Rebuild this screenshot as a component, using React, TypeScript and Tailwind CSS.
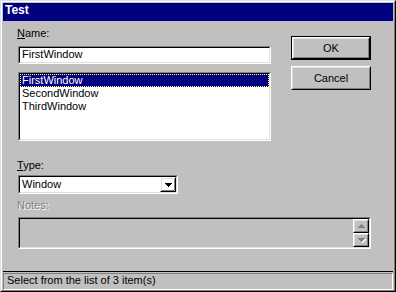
import React from 'react';

const Sunken = ({ className, innerClassName, children }: { className?: string; innerClassName?: string; children?: React.ReactNode }) => (
  <div className={`border border-t-[#808080] border-l-[#808080] border-r-white border-b-white ${className ?? ''}`}>
    <div className={`h-full border border-t-black border-l-black border-r-[#dfdfdf] border-b-[#dfdfdf] ${innerClassName ?? ''}`}>
      {children}
    </div>
  </div>
);

const Raised = ({ className, children }: { className?: string; children?: React.ReactNode }) => (
  <div className={`border border-t-white border-l-white border-r-black border-b-black ${className ?? ''}`}>
    <div className="h-full border border-t-[#dfdfdf] border-l-[#dfdfdf] border-r-[#808080] border-b-[#808080] flex items-center justify-center">
      {children}
    </div>
  </div>
);

const Arrow = ({ up, disabled }: { up?: boolean; disabled?: boolean }) => (
  <svg width="7" height="4" viewBox="0 0 7 4" className="overflow-visible">
    {disabled && (
      <path d={up ? 'M4 1h1v1h1v1h1v1H1V3h1V2h1V1z' : 'M1 1h7v1H7v1H6v1H5v1H4V4H3V3H2V2H1z'} fill="#fff" />
    )}
    <path
      d={up ? 'M3 0h1v1h1v1h1v1h1v1H0V3h1V2h1V1h1z' : 'M0 0h7v1H6v1H5v1H4v1H3V3H2V2H1V1H0z'}
      fill={disabled ? '#808080' : '#000'}
    />
  </svg>
);

export default function App() {
  return (
    <div
      className="w-[396px] h-[292px] bg-[#c0c0c0] border border-t-[#dfdfdf] border-l-[#dfdfdf] border-r-black border-b-black text-[11px] leading-[13px] text-black"
      style={{ fontFamily: '"Liberation Sans", Arial, sans-serif' }}
    >
      <div className="h-full border border-t-white border-l-white border-r-[#808080] border-b-[#808080] p-px flex flex-col">
        <div className="h-[18px] shrink-0 bg-[#000080] text-white font-bold text-[12px] pl-[2px] pt-[1px]">Test</div>

        <div className="h-[250px] shrink-0 pl-[15px] pt-[6px] flex flex-col">
          <div className="flex items-start">
            <div className="w-[253px] flex flex-col">
              <div className="-ml-px">
                <span className="underline">N</span>ame:
              </div>
              <Sunken className="mt-[6px] h-[18px]" innerClassName="bg-white pl-[2px]">
                <div className="pt-0">FirstWindow</div>
              </Sunken>
              <Sunken className="mt-[8px] h-[69px]" innerClassName="bg-white pt-0">
                <div className="mx-0 h-[13px] bg-[#000080] text-white pl-[2px] outline-1 outline-dotted outline-[#ffff80] -outline-offset-1">
                  FirstWindow
                </div>
                <div className="h-[13px] pl-[2px]">SecondWindow</div>
                <div className="h-[13px] pl-[2px]">ThirdWindow</div>
              </Sunken>
            </div>

            <div className="ml-[20px] mt-[9px] flex flex-col gap-[6px]">
              <div className="border border-black">
                <Raised className="w-[78px] h-[22px]">OK</Raised>
              </div>
              <Raised className="w-[80px] h-[24px]">Cancel</Raised>
            </div>
          </div>

          <div className="mt-[18px] -ml-px">
            <span className="underline">T</span>ype:
          </div>
          <Sunken className="mt-[3px] w-[160px] h-[19px]" innerClassName="bg-white flex items-stretch">
            <div className="flex-1 pl-[2px] pt-px">Window</div>
            <Raised className="w-[16px]">
              <Arrow />
            </Raised>
          </Sunken>

          <div className="mt-[5px] -ml-px text-[#808080] [text-shadow:1px_1px_0_#fff]">Notes:</div>
          <Sunken className="mt-[5px] w-[353px] h-[32px]" innerClassName="bg-[#c0c0c0] flex justify-end">
            <div className="w-[16px] flex flex-col">
              <Raised className="h-[14px]">
                <Arrow up disabled />
              </Raised>
              <Raised className="h-[14px]">
                <Arrow disabled />
              </Raised>
            </div>
          </Sunken>
        </div>

        <div className="h-px shrink-0 bg-black" />
        <div className="flex-1 pt-px">
          <div className="h-[17px] border border-t-[#808080] border-l-[#808080] border-r-white border-b-white pl-[3px]">
            Select from the list of 3 item(s)
          </div>
        </div>
      </div>
    </div>
  );
}
